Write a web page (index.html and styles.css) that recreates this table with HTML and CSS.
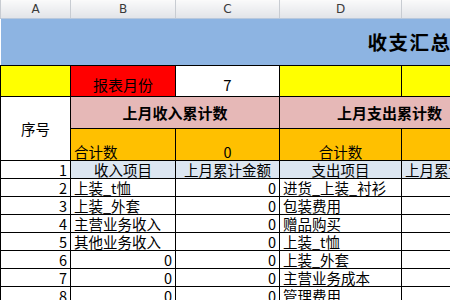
FILE: index.html
```html
<!DOCTYPE html>
<html lang="zh">
<head>
<meta charset="utf-8">
<link rel="stylesheet" href="styles.css">
</head>
<body>
<table class="sheet">
  <colgroup>
    <col class="col-a"><col class="col-b"><col class="col-c"><col class="col-d"><col class="col-e">
  </colgroup>
  <thead>
    <tr class="hdr"><th>A</th><th>B</th><th>C</th><th>D</th><th>E</th></tr>
  </thead>
  <tbody>
    <tr class="title-row"><td colspan="5" class="title"><span>收支汇总表</span></td></tr>
    <tr class="month-row">
      <td class="yellow"></td>
      <td class="red">报表月份</td>
      <td class="white center">7</td>
      <td class="yellow"></td>
      <td class="yellow"></td>
    </tr>
    <tr class="group-row">
      <td rowspan="2" class="white center middle">序号</td>
      <td colspan="2" class="pink group">上月收入累计数</td>
      <td colspan="2" class="pink group group-right">上月支出累计数</td>
    </tr>
    <tr class="total-row">
      <td class="orange">合计数</td>
      <td class="orange center">0</td>
      <td class="orange center">合计数</td>
      <td class="orange"></td>
    </tr>
    <tr class="row">
      <td class="num">1</td>
      <td class="head center">收入项目</td>
      <td class="head center">上月累计金额</td>
      <td class="head center">支出项目</td>
      <td class="head">上月累计金额</td>
    </tr>
    <tr class="row"><td class="num">2</td><td>上装_t恤</td><td class="num">0</td><td>进货_上装_衬衫</td><td></td></tr>
    <tr class="row"><td class="num">3</td><td>上装_外套</td><td class="num">0</td><td>包装费用</td><td></td></tr>
    <tr class="row"><td class="num">4</td><td>主营业务收入</td><td class="num">0</td><td>赠品购买</td><td></td></tr>
    <tr class="row"><td class="num">5</td><td>其他业务收入</td><td class="num">0</td><td>上装_t恤</td><td></td></tr>
    <tr class="row"><td class="num">6</td><td class="num">0</td><td class="num">0</td><td>上装_外套</td><td></td></tr>
    <tr class="row"><td class="num">7</td><td class="num">0</td><td class="num">0</td><td>主营业务成本</td><td></td></tr>
    <tr class="row"><td class="num">8</td><td class="num">0</td><td class="num">0</td><td>管理费用</td><td></td></tr>
  </tbody>
</table>
</body>
</html>
```

FILE: styles.css
```css
* { box-sizing: border-box; }
html, body {
  margin: 0;
  padding: 0;
  width: 450px;
  height: 300px;
  overflow: hidden;
  background: #fff;
}
.sheet {
  border-collapse: collapse;
  table-layout: fixed;
  width: 506px;
  font-family: "Noto Sans CJK SC", "Noto Sans", sans-serif;
  font-size: 14.5px;
  color: #000;
}
.col-a { width: 70px; }
.col-b { width: 105px; }
.col-c { width: 104px; }
.col-d { width: 122px; }
.col-e { width: 105px; }

.hdr th {
  height: 18px;
  padding: 0;
  font-family: "DejaVu Sans", sans-serif;
  font-weight: normal;
  font-size: 12px;
  line-height: 16px;
  color: #3a3a3a;
  background: linear-gradient(#fafafa, #e2e4e8);
  border-left: 1px solid #c8ccd2;
  border-right: 1px solid #c8ccd2;
  border-bottom: 1px solid #b8c8dc;
}

td {
  border: 1px solid #000;
  padding: 0 3px;
  white-space: nowrap;
  overflow: hidden;
  vertical-align: bottom;
  line-height: 17px;
}

.title-row td {
  height: 47px;
  background: #8db4e2;
  border: none;
  border-bottom: 1px solid #000;
  vertical-align: middle;
  padding: 0 0 0 367px;
  font-size: 19.5px;
  font-weight: bold;
  line-height: 22px;
  letter-spacing: 1.5px;
}

.month-row td { height: 31px; }
.group-row td { height: 32px; }
.total-row td { height: 32px; }
.row td { height: 18px; }

.yellow { background: #ffff00; }
.red { background: #ff0000; padding-left: 22px; }
.white { background: #fff; }
.pink { background: #e6b8b7; }
.orange { background: #ffc000; }
.head { background: #dce6f1; }

.center { text-align: center; }
.middle { vertical-align: middle; }
.num { text-align: right; }

.group {
  text-align: center;
  vertical-align: middle;
  font-weight: bold;
  font-size: 15px;
}
.group-right { padding-right: 10px; }
.month-row td { font-size: 15px; line-height: 20px; padding-bottom: 1px; }
```
